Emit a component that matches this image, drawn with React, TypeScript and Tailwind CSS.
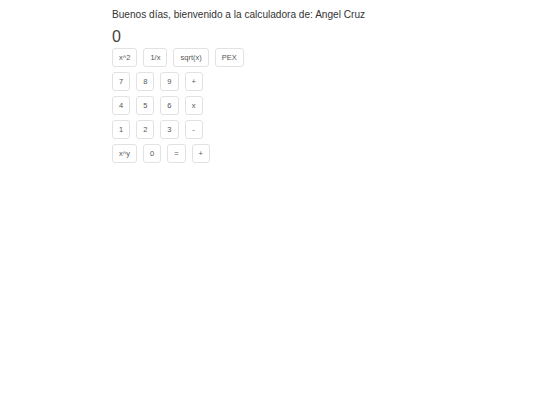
const rows: string[][] = [
  ["x^2", "1/x", "sqrt(x)", "PEX"],
  ["7", "8", "9", "+"],
  ["4", "5", "6", "x"],
  ["1", "2", "3", "-"],
  ["x^y", "0", "=", "+"],
];

function Key({ label }: { label: string }) {
  return (
    <button
      type="button"
      className="flex h-[19px] min-w-[18px] items-center justify-center rounded-[3px] border border-[#e2e2e2] bg-white px-[6px] text-[7.5px] text-[#555]"
    >
      {label}
    </button>
  );
}

export default function App() {
  return (
    <div className="min-h-[405px] w-[540px] bg-white font-['Liberation_Sans',Arial,sans-serif] text-[#333]">
      <div className="pl-[112px] pt-[8px]">
        <h1 className="text-[10.1px] leading-[14px]">
          Buenos días, bienvenido a la calculadora de: Angel Cruz
        </h1>
        <div className="mt-[6px] text-[16px] leading-[18px] text-[#444]">0</div>
        <div className="mt-[2px] flex flex-col gap-[5px]">
          {rows.map((row, i) => (
            <div key={i} className="flex gap-[6px]">
              {row.map((label, j) => (
                <Key key={j} label={label} />
              ))}
            </div>
          ))}
        </div>
      </div>
    </div>
  );
}
